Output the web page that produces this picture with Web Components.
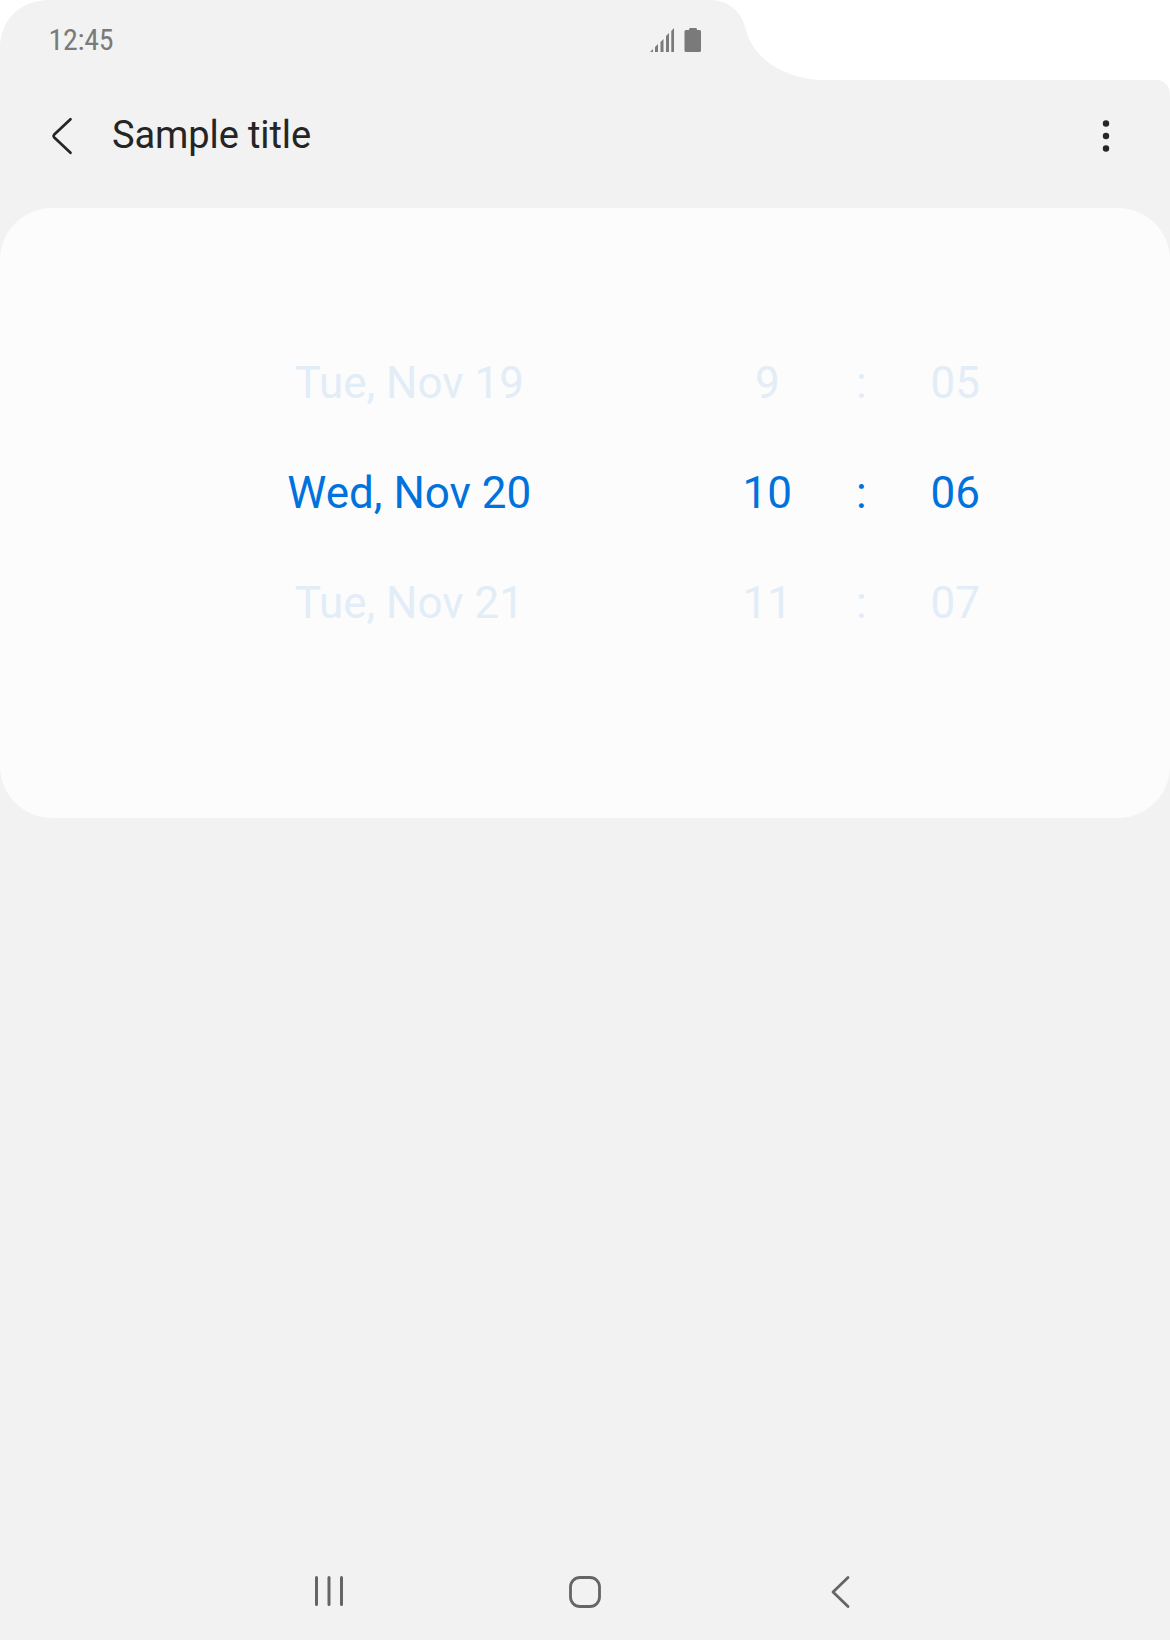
<!DOCTYPE html>
<html lang="en">
<head>
<meta charset="utf-8">
<title>Sample title</title>
<style>
html,body{margin:0;padding:0;background:#fff}
body{width:1170px;height:1640px;overflow:hidden;font-family:Roboto,"Liberation Sans",sans-serif}
</style>
</head>
<body>
<device-screen>
  <status-bar slot="status" time="12:45"></status-bar>
  <app-bar>Sample title</app-bar>
  <picker-card>
    <picker-row><span>Tue, Nov 19</span><span>9</span><span>:</span><span>05</span></picker-row>
    <picker-row selected><span>Wed, Nov 20</span><span>10</span><span>:</span><span>06</span></picker-row>
    <picker-row><span>Tue, Nov 21</span><span>11</span><span>:</span><span>07</span></picker-row>
  </picker-card>
  <nav-bar slot="nav"></nav-bar>
</device-screen>
<script>
const define = (name, markup, setup) => customElements.define(name, class extends HTMLElement {
  constructor() {
    super();
    this.attachShadow({ mode: "open" }).innerHTML = markup;
  }
  connectedCallback() { if (setup) setup(this, this.shadowRoot); }
});

define("device-screen", `
<style>
:host{display:flex;flex-direction:column;width:1170px;height:1640px;position:relative;isolation:isolate}
.shape{position:absolute;inset:0;z-index:-1;display:block}
main{flex:1;display:flex;flex-direction:column}
</style>
<svg class="shape" width="1170" height="1640" viewBox="0 0 1170 1640"><path fill="#f2f2f2" d="M0 48C0 20 20 0 50 0H710C728 0 741 11 745.500 28C752 57 782 80 828 80H1155Q1170 80 1170 97V1640H0Z"/></svg>
<slot name="status"></slot><main><slot></slot></main><slot name="nav"></slot>`);

define("status-bar", `
<style>
:host{display:flex;height:80px;width:702px;box-sizing:border-box;padding-left:48.5px;justify-content:space-between;align-items:flex-start;color:#7a7a7a}
.time{margin-top:22px;font:400 30px/35px "Roboto Condensed",Roboto,sans-serif;font-stretch:75%;letter-spacing:-.3px}
svg{display:block;margin-top:27px}
</style>
<span class="time"></span>
<svg width="52" height="26" viewBox="650 27 52 26" fill="#7a7a7a">
<path d="M650 52L653 49V52ZM655 47L658 44V52H655ZM660.5 42L663.5 39V52H660.5ZM666 36L669 33V52H666ZM671.3 31L674 28V52H671.3Z"/>
<path d="M690 28H696Q697 28 697 30H699.500Q701 30 701 31.500V50.500Q701 52 699.500 52H686Q684.500 52 684.500 50.500V31.500Q684.500 30 686 30H689Q689 28 690 28Z"/>
</svg>`, (el, root) => { root.querySelector(".time").textContent = el.getAttribute("time"); });

define("app-bar", `
<style>
:host{display:flex;height:128px;box-sizing:border-box;padding:0 58px 0 48px;color:#252525}
.back{margin-top:34px}
h1{flex:1;margin:33px 0 0 36px;font:400 38px/45px Roboto,sans-serif;letter-spacing:-.1px}
.more{margin-top:36px}
</style>
<svg class="back" width="28" height="44" viewBox="48 114 28 44" fill="none" stroke="#252525" stroke-width="2.700" stroke-linecap="round" stroke-linejoin="round"><path d="M70.500 119.200L54 134.800Q53 136 54 137.200L70.500 152.800"/></svg>
<h1><slot></slot></h1>
<svg class="more" width="12" height="40" viewBox="1100 116 12 40" fill="#252525"><circle cx="1106" cy="123.500" r="3.200"/><circle cx="1106" cy="136" r="3.200"/><circle cx="1106" cy="148.500" r="3.200"/></svg>`);

define("picker-card", `
<style>:host{display:block;height:610px;box-sizing:border-box;padding-top:120px;background:#fcfcfc;border-radius:52px}</style><slot></slot>`);

define("picker-row", `
<style>
:host{display:flex;height:110px;box-sizing:border-box;padding-left:170.3px;font:400 44px/110px Roboto,sans-serif;color:#e2edf8;text-align:center}
:host([selected]){color:#0072de}
::slotted(span){flex:none;width:96px;white-space:nowrap}
::slotted(span:first-child){width:478px}
::slotted(span:nth-child(2)){margin-left:71px}
::slotted(span:nth-child(3)){width:92px}
</style><slot></slot>`);

define("nav-bar", `
<style>
:host{display:flex;height:96px;align-items:center;padding-left:313px}
svg{display:block}
.home{margin:0 229px 0 223px}
</style>
<svg width="32" height="34" viewBox="313 1575 32 34" fill="none" stroke="#656565" stroke-width="3" stroke-linecap="round"><path d="M316.500 1577.500V1604.500M329 1577.500V1604.500M341.500 1577.500V1604.500"/></svg>
<svg class="home" width="34" height="34" viewBox="568 1575 34 34" fill="none" stroke="#656565" stroke-width="2.800"><rect x="570.500" y="1577.500" width="29" height="29" rx="9.500"/></svg>
<svg width="20" height="34" viewBox="831 1575 20 34" fill="none" stroke="#656565" stroke-width="2.800" stroke-linecap="round" stroke-linejoin="round"><path d="M848 1577.500L833 1592L848 1606.500"/></svg>`);
</script>
</body>
</html>
